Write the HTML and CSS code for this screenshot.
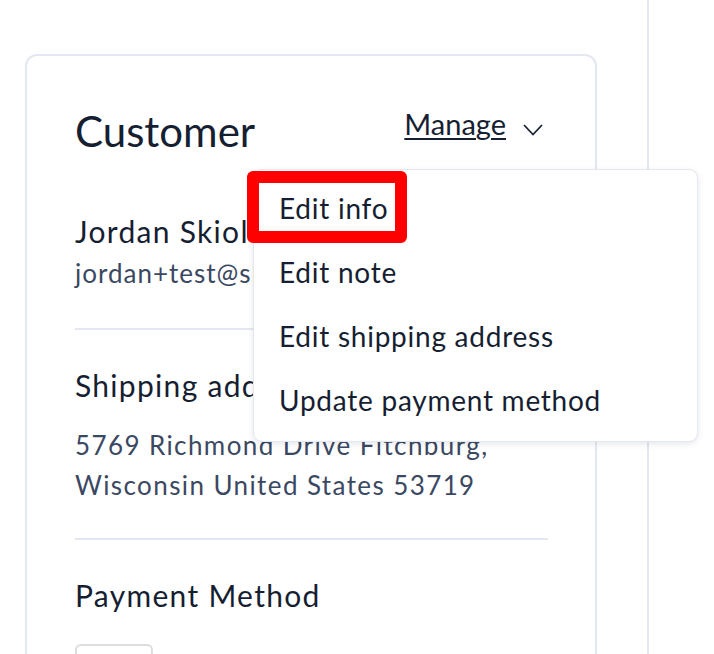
FILE: index.html
```html
<!DOCTYPE html>
<html>
	<head>
		<meta charset="utf-8">
		<link rel="stylesheet" href="styles.css">
	</head>
	<body>
		<div class="page">
			<div class="main">
				<div class="card">
					<div class="card-head">
						<h2>Customer</h2>
						<a class="manage" href="#">Manage
							<svg class="chevron" width="20" height="12" viewBox="0 0 20 12">
								<path d="M1 1 L10 10.5 L19 1" fill="none" stroke="#1b2236" stroke-width="1.8"/>
							</svg>
						</a>
					</div>

					<div class="menu">
						<div class="menu-item">Edit info</div>
						<div class="menu-item">Edit note</div>
						<div class="menu-item">Edit shipping address</div>
						<div class="menu-item">Update payment method</div>
						<div class="highlight"></div>
					</div>

					<div class="name">Jordan Skiold</div>
					<div class="email">jordan+test@skiold.com</div>
					<hr class="divider">

					<div class="label">Shipping address</div>
					<div class="address">5769 Richmond Drive Fitchburg,<br>Wisconsin United States 53719</div>
					<hr class="divider divider-low">

					<div class="label label-pay">Payment Method</div>
					<div class="pay-card"></div>
				</div>
			</div>
			<div class="side"></div>
		</div>
	</body>
</html>
```

FILE: styles.css
```css
body {
	margin: 0;
	background-color: #ffffff;
	font-family: "Lato", "Noto Sans", sans-serif;
	color: #161e32;
}

.page {
	display: flex;
	height: 654px;
	overflow: hidden;
}

.main {
	width: 622px;
	flex-shrink: 0;
	padding: 54px 0 0 25px;
}

.side {
	flex: 1;
	border-left: 2px solid #e3e7f1;
}

.card {
	position: relative;
	width: 572px;
	height: 700px;
	box-sizing: border-box;
	border: 2px solid #e3e7f1;
	border-radius: 12px;
	padding: 50px 47px 0 48px;
}

.card-head {
	display: flex;
	justify-content: space-between;
	align-items: flex-start;
}

.card-head h2 {
	margin: 0;
	font-size: 42px;
	font-weight: 400;
	line-height: 1.2;
}

.manage {
	display: flex;
	align-items: center;
	margin-top: 1px;
	color: #161e32;
	font-size: 29px;
	line-height: 1.2;
	text-decoration: underline;
	text-decoration-thickness: 2px;
	text-underline-offset: 3px;
}

.chevron {
	margin-left: 17px;
	margin-right: 5px;
	margin-top: 12px;
}

.name {
	margin-top: 57px;
	font-size: 30px;
	line-height: 36px;
	letter-spacing: 1.3px;
}

.email {
	margin-top: 8px;
	font-size: 26px;
	line-height: 32px;
	letter-spacing: 1px;
	color: #3b4862;
}

.divider {
	margin: 39px 0 0 0;
	border: none;
	height: 2px;
	background-color: #e3e7f1;
}

.divider-low {
	margin-top: 33px;
}

.label {
	margin-top: 37px;
	font-size: 30px;
	line-height: 36px;
	letter-spacing: 1.3px;
}

.address {
	margin-top: 22px;
	font-size: 26px;
	line-height: 40px;
	letter-spacing: 1.4px;
	color: #3b4862;
}

.pay-card {
	margin-top: 31px;
	width: 78px;
	height: 40px;
	box-sizing: border-box;
	border: 2px solid #dcdde0;
	border-radius: 6px;
}

.menu {
	position: absolute;
	left: 226px;
	top: 113px;
	width: 445px;
	box-sizing: border-box;
	padding: 6px 0 9px 0;
	background-color: #ffffff;
	border: 1px solid #e3e7f1;
	border-radius: 9px;
	box-shadow: 0 2px 6px rgba(20, 30, 60, 0.1);
	z-index: 2;
}

.menu-item {
	padding-left: 25px;
	font-size: 28px;
	line-height: 64px;
	letter-spacing: 0.75px;
	white-space: nowrap;
}

.highlight {
	position: absolute;
	left: -7px;
	top: 1px;
	width: 160px;
	height: 72px;
	box-sizing: border-box;
	border: 12px solid #ff0000;
	border-radius: 6px;
}
```
